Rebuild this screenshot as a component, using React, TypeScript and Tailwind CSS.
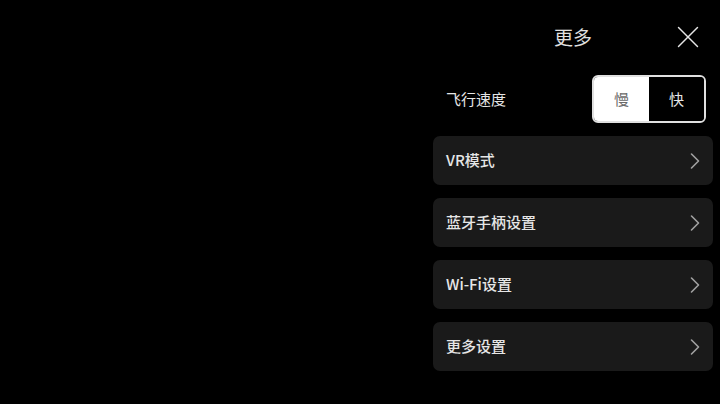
import { ChevronRight, X } from "lucide-react";

const font = {
  fontFamily: '"Noto Sans CJK SC", "Noto Sans", sans-serif',
};

const items = ["VR模式", "蓝牙手柄设置", "Wi-Fi设置", "更多设置"];

export default function App() {
  return (
    <div
      className="flex h-[404px] w-[720px] justify-end bg-black pr-[7px]"
      style={font}
    >
      <div className="flex w-[280px] flex-col pt-[14px]">
        {/* Header */}
        <div className="relative flex h-[46px] items-center justify-center">
          <span className="text-[19px] text-[#e0e0e0]">更多</span>
          <X
            className="absolute right-[6px] h-[38px] w-[38px] text-[#e6e6e6]"
            strokeWidth={0.9}
          />
        </div>

        {/* Flight speed */}
        <div className="mt-[15px] flex h-[48px] items-center justify-between pl-[13px] pr-[7px]">
          <span className="text-[15px] text-[#e6e6e6]">飞行速度</span>
          <div className="flex h-[48px] w-[114px] overflow-hidden rounded-[6px] border-2 border-[#e0e0e0]">
            <div className="flex flex-1 items-center justify-center bg-white text-[15px] text-[#6a6a6a]">
              慢
            </div>
            <div className="flex flex-1 items-center justify-center bg-black text-[15px] text-[#e6e6e6]">
              快
            </div>
          </div>
        </div>

        {/* Menu items */}
        <div className="mt-[13px] flex flex-col gap-[13px]">
          {items.map((label) => (
            <div
              key={label}
              className="flex h-[49px] items-center justify-between rounded-[7px] bg-[#1a1a1a] pl-[13px] pr-[4px]"
            >
              <span className="text-[15px] font-medium text-[#e6e6e6]">
                {label}
              </span>
              <ChevronRight
                className="h-[28px] w-[28px] text-[#a0a0a0]"
                strokeWidth={1.4}
              />
            </div>
          ))}
        </div>
      </div>
    </div>
  );
}
